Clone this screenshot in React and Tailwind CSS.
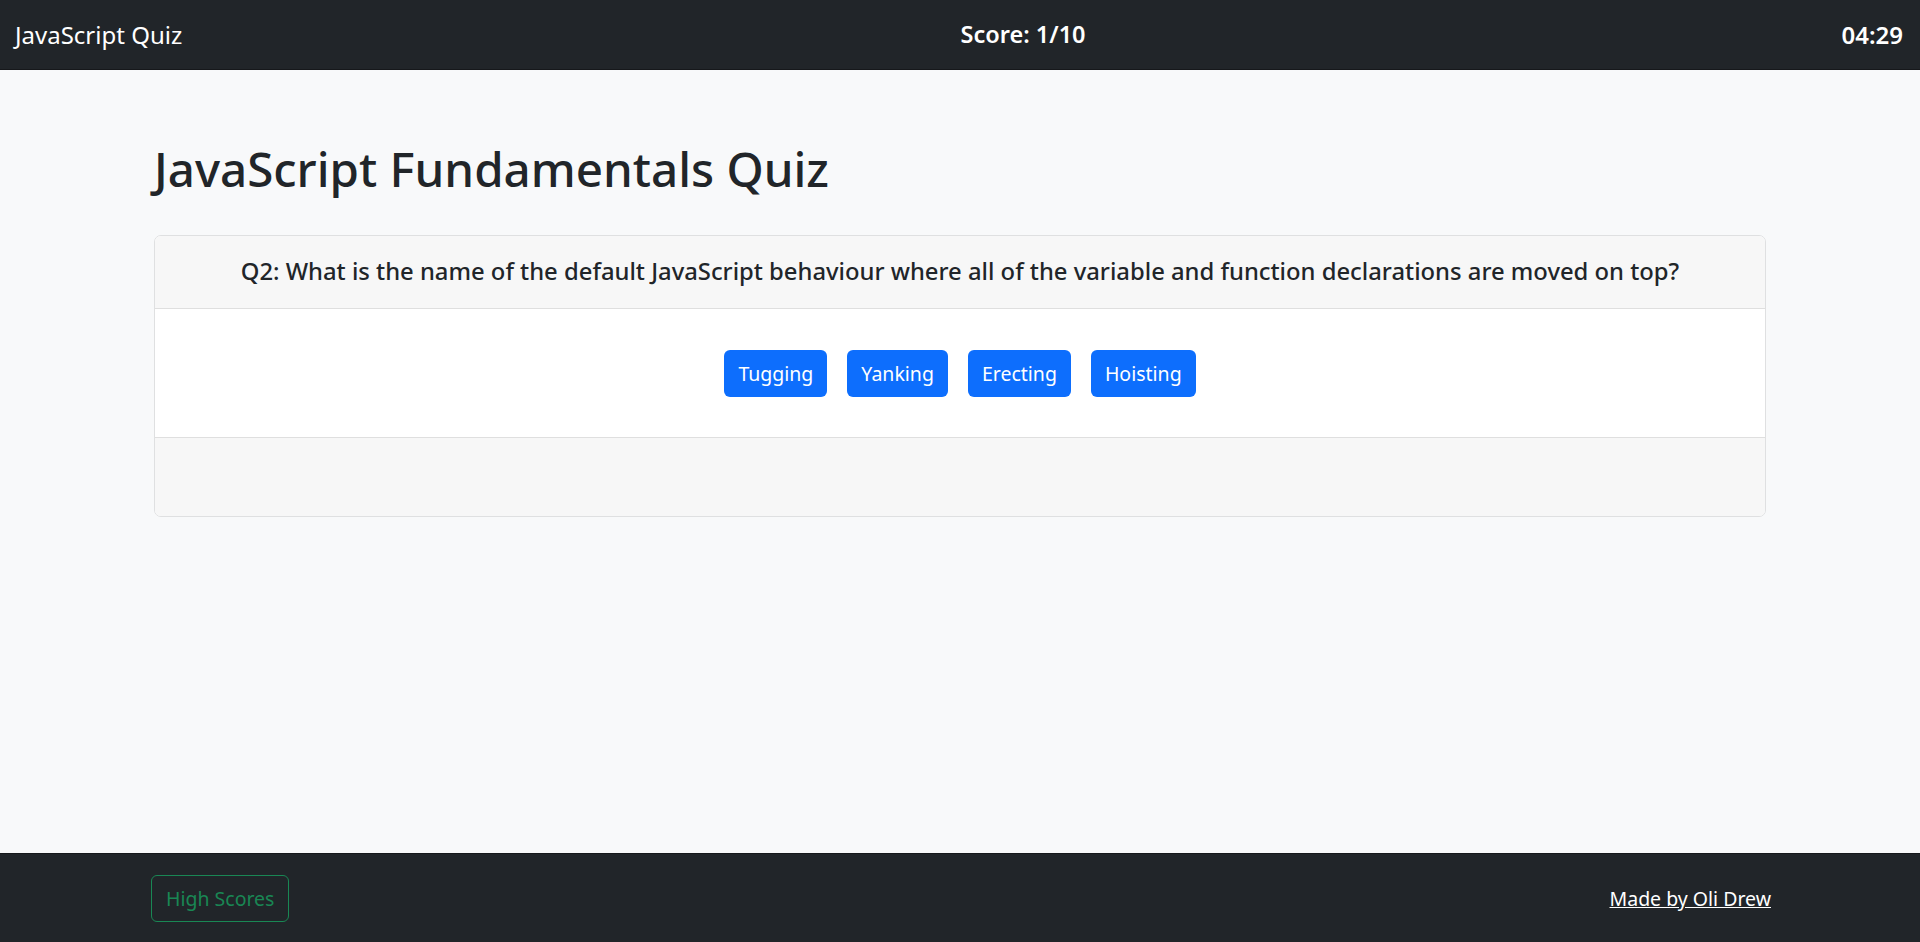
import { useState } from "react";

const answers = ["Tugging", "Yanking", "Erecting", "Hoisting"];

function NavBar({ score, total, time }) {
  return (
    <nav className="h-[70px] bg-[#212529] border-b border-[#16181b] flex items-center justify-between px-[15px] text-white">
      <span className="text-[24px] w-[190px]">JavaScript Quiz</span>
      <span className="text-[23.5px] font-semibold ml-[126px]">
        Score: {score}/{total}
      </span>
      <span className="text-[24px] font-semibold w-[190px] text-right pr-[2px]">
        {time}
      </span>
    </nav>
  );
}

function QuestionCard({ question, onAnswer }) {
  return (
    <div className="mt-[37px] bg-white border border-[#dfe0e1] rounded-[7px] overflow-hidden">
      <div className="h-[73px] bg-[#f7f7f7] border-b border-[#dfdfdf] flex items-center justify-center">
        <h5 className="text-[23.8px] font-medium text-[#212529]">{question}</h5>
      </div>
      <div className="h-[128px] flex items-center justify-center gap-[20px] pt-[1px]">
        {answers.map((item) => (
          <button
            key={item}
            onClick={() => onAnswer(item)}
            className="h-[47px] px-[14px] rounded-[6px] bg-[#0d6efd] text-white text-[19.5px] hover:bg-[#0b5ed7]"
          >
            {item}
          </button>
        ))}
      </div>
      <div className="h-[79px] bg-[#f7f7f7] border-t border-[#dfdfdf]"></div>
    </div>
  );
}

export default function App() {
  const [score, setScore] = useState(1);

  function handleAnswer(item) {
    if (item === "Hoisting") setScore((s) => s + 1);
  }

  return (
    <div
      className="min-h-[942px] flex flex-col bg-[#f8f9fa]"
      style={{ fontFamily: '"Noto Sans", "Open Sans", sans-serif' }}
    >
      <NavBar score={score} total={10} time="04:29" />
      <main className="flex-1 px-[154px] pt-[70px]">
        <h1 className="text-[47.5px] font-medium text-[#212529] leading-[58px]">
          JavaScript Fundamentals Quiz
        </h1>
        <QuestionCard
          question="Q2: What is the name of the default JavaScript behaviour where all of the variable and function declarations are moved on top?"
          onAnswer={handleAnswer}
        />
      </main>
      <footer className="h-[89px] bg-[#212529] border-t border-[#16181b] flex items-center justify-between pl-[151px] pr-[149px] pt-[1px]">
        <button className="h-[47px] px-[14px] rounded-[6px] border border-[#198754] text-[#198754] text-[19.5px] hover:bg-[#198754] hover:text-white">
          High Scores
        </button>
        <a href="#" className="text-white underline text-[19.5px]">
          Made by Oli Drew
        </a>
      </footer>
    </div>
  );
}
